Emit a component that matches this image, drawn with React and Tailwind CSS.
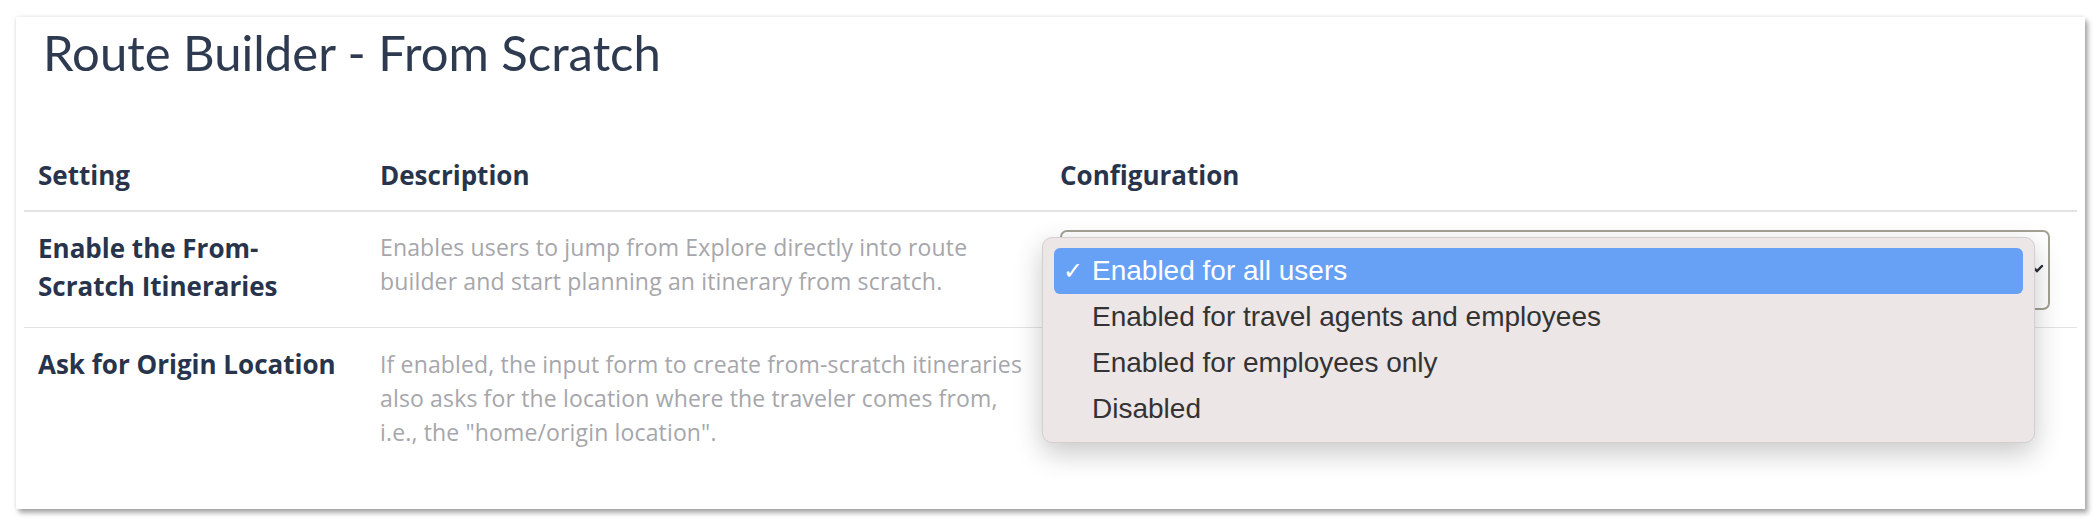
import React from "react";

const rows = [
  {
    name: ["Enable the From-", "Scratch Itineraries"],
    description: [
      "Enables users to jump from Explore directly into route",
      "builder and start planning an itinerary from scratch.",
    ],
    select: true,
  },
  {
    name: ["Ask for Origin Location"],
    description: [
      "If enabled, the input form to create from-scratch itineraries",
      "also asks for the location where the traveler comes from,",
      'i.e., the "home/origin location".',
    ],
    select: false,
  },
];

const options = [
  "Enabled for all users",
  "Enabled for travel agents and employees",
  "Enabled for employees only",
  "Disabled",
];

const SelectMenu = () => (
  <div className="relative h-[80px] w-[990px]">
    <div className="h-full w-full rounded-[7px] border-2 border-[#a3a295] bg-white">
      <svg
        className="absolute right-[6px] top-[32px]"
        width="14"
        height="14"
        viewBox="0 0 14 14"
        fill="none"
        stroke="#2b2f3a"
        strokeWidth="2.4"
        strokeLinecap="round"
      >
        <path d="M2 4l5 5 5-5" />
      </svg>
    </div>

    <div className="absolute left-[-18px] top-[7px] w-[993px] rounded-[10px] border border-[#d3cfd0] bg-[#ece6e7] px-[11px] py-[10px] shadow-[0_10px_28px_rgba(0,0,0,0.22)] font-['Liberation_Sans',Arial,sans-serif] text-[28px]">
      {options.map((opt, i) => (
        <div
          key={opt}
          className={`flex h-[46px] items-center rounded-[6px] pl-[9px] ${
            i === 0 ? "bg-[#66a1f6] text-white" : "text-[#333333]"
          }`}
        >
          <span className="w-[29px] text-[24px]">{i === 0 ? "✓" : ""}</span>
          <span>{opt}</span>
        </div>
      ))}
    </div>
  </div>
);

export default function App() {
  return (
    <div className="min-h-[528px] bg-white pl-[16px] pt-[17px] font-['Open_Sans',sans-serif]">
      <div className="h-[492px] w-[2069px] bg-white px-[8px] shadow-[3px_4px_5px_rgba(0,0,0,0.33),0_0_4px_rgba(0,0,0,0.12)]">
        <h1 className="pl-[19px] pt-[7px] font-['Lato',sans-serif] text-[49px] font-normal leading-[56px] text-[#2d3a50]">
          Route Builder - From Scratch
        </h1>

        <div className="mt-[80px] grid grid-cols-[342px_680px_1020px] border-b-2 border-[#e3e3e3] pb-[20px] text-[26px] font-bold leading-[30px] text-[#28344b]">
          <div className="pl-[14px]">Setting</div>
          <div className="pl-[14px]">Description</div>
          <div className="pl-[14px]">Configuration</div>
        </div>

        {rows.map((row, idx) => (
          <div
            key={idx}
            className={`grid grid-cols-[342px_680px_1020px] ${
              idx === 0 ? "border-b border-[#e3e3e3]" : ""
            }`}
          >
            <div className="pl-[14px] pt-[17px] text-[26px] font-bold leading-[38px] text-[#28344b]">
              {row.name.map((l) => (
                <div key={l}>{l}</div>
              ))}
            </div>
            <div
              className={`pl-[14px] text-[23px] leading-[34px] tracking-[0.15px] text-[#a6a6ab] ${
                idx === 0 ? "pt-[18px]" : "pt-[19px]"
              }`}
            >
              {row.description.map((l) => (
                <div key={l}>{l}</div>
              ))}
            </div>
            <div className="pl-[14px] pt-[18px] pb-[17px]">{row.select && <SelectMenu />}</div>
          </div>
        ))}
      </div>
    </div>
  );
}
